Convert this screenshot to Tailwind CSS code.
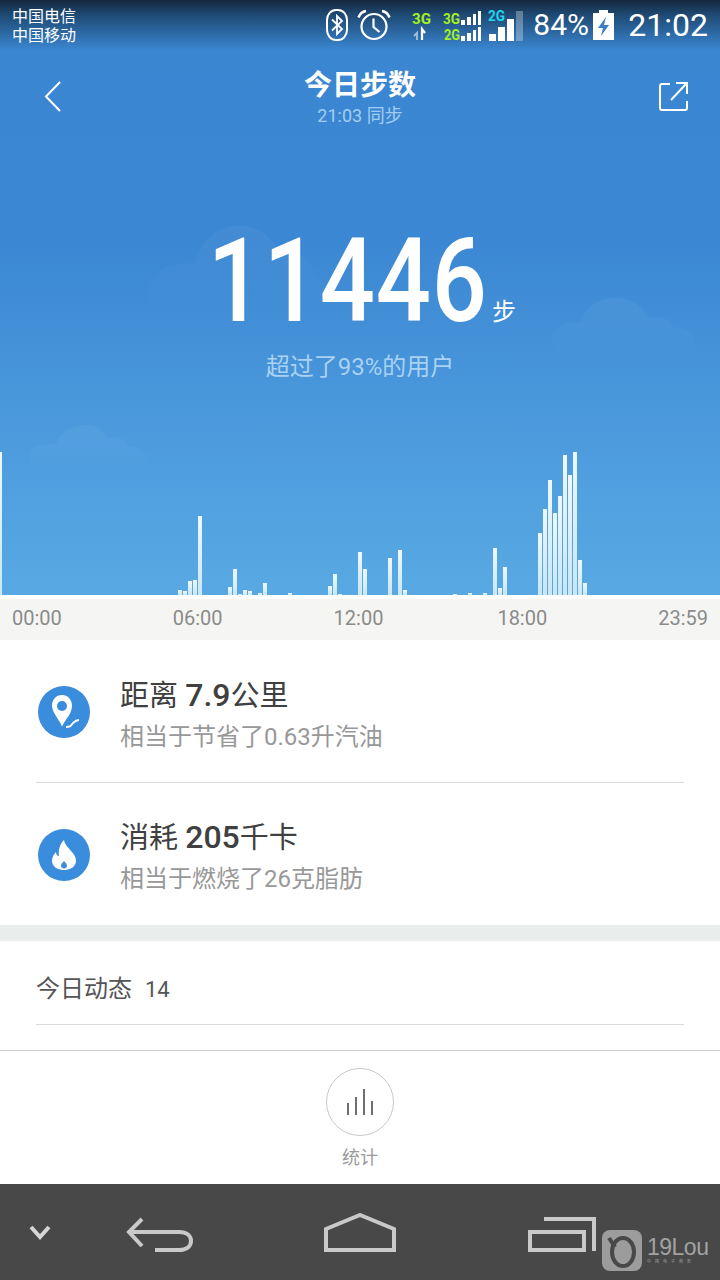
<!DOCTYPE html>
<html lang="zh">
<head>
  <meta charset="UTF-8" />
  <title>今日步数</title>
  <script src="https://cdn.jsdelivr.net/npm/@tailwindcss/browser@4"></script>
</head>
<body class="bg-white font-['Roboto','Noto_Sans_CJK_SC',sans-serif]">
  <div class="w-[720px] h-[1280px] flex flex-col overflow-hidden">

    <!-- blue top part -->
    <section class="relative h-[595px] shrink-0 overflow-hidden bg-[linear-gradient(180deg,#3a86d1_0px,#3b87d3_240px,#4e9cde_450px,#58a9e3_595px)] text-white">
      <div class="absolute inset-x-0 top-0 h-[50px] bg-[linear-gradient(180deg,#14283c_0%,#1f4a74_30%,#3a86d1_100%)]"></div>

      <!-- clouds -->
      <svg class="absolute left-[0px] top-[0px]" width="720" height="595" viewBox="0 0 720 595">
        <defs>
          <linearGradient id="cloudFade" x1="0" y1="0" x2="0" y2="1">
            <stop offset="0" stop-color="#fff" stop-opacity="0.045"/>
            <stop offset="1" stop-color="#fff" stop-opacity="0"/>
          </linearGradient>
        </defs>
        <path d="M150 310C145 285 155 265 177 265C185 263 191 263 195 265C201 237 221 225 241 226C261 227 273 239 277 251C295 247 313 261 315 277C325 283 329 293 325 310Z" fill="url(#cloudFade)"/>
        <path d="M552 338C554 326 566 322 582 322C584 306 602 298 614 298C630 298 644 306 648 318C662 314 670 320 674 328C688 326 698 334 698 360H572C560 358 552 348 552 338Z" fill="url(#cloudFade)"/>
        <path d="M30 461C28 449 36 445 46 445C50 443 54 443 56 445C60 431 74 425 86 425C98 425 106 433 108 439C116 435 126 439 128 447C142 445 150 455 148 475H42C34 473 30 467 30 461Z" fill="url(#cloudFade)"/>
      </svg>

      <!-- status bar -->
      <div class="relative h-[50px] flex items-start">
        <div class="pl-[12px] pt-[7px] text-[16px] leading-[19px] text-white">
          <p>中国电信</p>
          <p>中国移动</p>
        </div>
        <div class="ml-auto relative flex items-center h-[50px] pr-[12px]">
          <svg width="24" height="34" viewBox="0 0 24 34" fill="none" stroke="#fff" stroke-width="2" class="mr-[8px]"><rect x="2" y="2" width="20" height="30" rx="9" ry="10"/><path d="M7 11.500 17 21l-5 5V8l5 5-10 9.500" stroke-width="1.800"/></svg>
          <svg width="34" height="32" viewBox="0 0 34 32" fill="none" stroke="#fff" stroke-width="2.200" class="mr-[18px]"><circle cx="17" cy="17.500" r="12.500"/><path d="M16.500 9.500v8.500l6 5" /><path d="M1.500 8.500C3 4.500 6 2.500 9 2M32.500 8.500C31 4.500 28 2.500 25 2" stroke-width="2.600"/></svg>
          <svg width="116" height="36" viewBox="0 0 116 36" class="mr-[8px] font-bold">
            <text x="3" y="17" font-size="15" fill="#a6f01e" textLength="19" lengthAdjust="spacingAndGlyphs">3G</text>
            <path d="M8 33v-7l-3 3" fill="none" stroke="#9dbbd8" stroke-width="2"/><path d="M13 33v-11l3 4" fill="none" stroke="#fff" stroke-width="2.200"/>
            <text x="34" y="17" font-size="14" fill="#a6f01e" textLength="17" lengthAdjust="spacingAndGlyphs">3G</text>
            <text x="35" y="33" font-size="14" fill="#a6f01e" textLength="16" lengthAdjust="spacingAndGlyphs">2G</text>
            <path d="M52 13h4v5h-4zM58 10h4v8h-4zM64 7h3v11h-3zM69 4h3v14h-3zM52 29h4v5h-4zM58 26h4v8h-4zM64 23h3v11h-3zM69 20h3v14h-3z" fill="#fff"/>
            <text x="79" y="14" font-size="15" fill="#1fd6ec" textLength="17" lengthAdjust="spacingAndGlyphs">2G</text>
            <path d="M80 27h7v7h-7zM89 20h7v14h-7zM98 12h7v22h-7z" fill="#fff"/>
            <path d="M107 4h7v30h-7z" fill="#fff" fill-opacity="0.3"/>
          </svg>
          <span class="text-[30px] leading-none w-[60px]">84%</span>
          <svg width="21" height="30" viewBox="0 0 21 30" class="mr-[14px]"><path d="M6 0h9v3h6v27H0V3h6z" fill="#fff"/><path d="M13 7 5 18h5l-2 8 8-11h-5z" fill="#3a7fc4"/></svg>
          <span class="text-[32px] leading-none">21:02</span>
        </div>
      </div>

      <!-- title row -->
      <div class="relative h-[80px] flex items-start">
        <svg width="20" height="32" viewBox="0 0 20 32" fill="none" stroke="#fff" stroke-width="2" class="absolute left-[43px] top-[30px]"><path d="M17 2 3 16.500 17 31"/></svg>
        <div class="w-full text-center">
          <h1 class="text-[28px] leading-[34px] mt-[19px] font-bold">今日步数</h1>
          <p class="text-[18px] leading-[20px] mt-[3px] text-[#a3cdf0]">21:03 同步</p>
        </div>
        <svg width="30" height="30" viewBox="0 0 30 30" fill="none" stroke="#fff" stroke-width="2" class="absolute left-[659px] top-[31px]"><path d="M11 3H3a2 2 0 0 0-2 2v22a2 2 0 0 0 2 2h23a2 2 0 0 0 2-2v-7"/><path d="M12 19 27 3M17 2h11v11"/></svg>
      </div>

      <!-- step count -->
      <div class="relative h-[183px] pt-[93px]">
        <div class="flex justify-center">
          <span class="inline-block origin-center scale-x-[0.83] text-[117px] leading-[116px] font-medium tracking-[1px] ml-[-25px]">11446</span>
        </div>
        <span class="absolute left-[492px] top-[168px] text-[24px] leading-[28px]">步</span>
      </div>
      <p class="relative mt-[39px] text-center text-[24px] leading-[30px] text-[#a9d2f2]">超过了93%的用户</p>

      <!-- step bars, one slot every 5px -->
      <div id="bars" class="absolute left-[-2px] bottom-0 h-[150px] flex items-end"></div>
    </section>

    <!-- time axis -->
    <div class="h-[45px] shrink-0 bg-[#f5f6f3] border-t-[4px] border-white flex items-center justify-between px-[12px] pb-[4px] text-[20px] text-[#8b8b8b]">
      <span>00:00</span>
      <span>06:00</span>
      <span>12:00</span>
      <span class="ml-[3px]">18:00</span>
      <span>23:59</span>
    </div>

    <!-- stats -->
    <section class="h-[285px] shrink-0 bg-white px-[36px]">
      <div class="h-[143px] flex items-start border-b border-[#d9d9d9]">
        <div class="mt-[46px] w-[52px] h-[52px] ml-[2px] rounded-full bg-[#3a8cdc] flex items-center justify-center">
          <svg width="34" height="36" viewBox="0 0 34 36"><path d="M15 1C9 1 5 6 5 11.500c0 7 6 12 10 21 2-4 4-7 6-9.500C23 20 25 16 25 11.500 25 6 21 1 15 1Z" fill="#fff"/><circle cx="15" cy="12" r="5" fill="#3a8cdc"/><path d="M17 34c5 0 6-2 8-5 2-2 4-3 7-3" fill="none" stroke="#3a8cdc" stroke-width="4"/><path d="M19 33c4 0 5-1 7-4 2-2 3-3 6-3" fill="none" stroke="#fff" stroke-width="1.800"/></svg>
        </div>
        <div class="ml-[30px]">
          <p class="mt-[37px] text-[29px] leading-[36px] text-[#404040]">距离 <span class="text-[32px] font-medium">7.9</span>公里</p>
          <p class="mt-[8px] text-[24px] leading-[30px] text-[#989898]">相当于节省了0.63升汽油</p>
        </div>
      </div>
      <div class="flex items-start">
        <div class="mt-[46px] w-[52px] h-[52px] ml-[2px] rounded-full bg-[#3a8cdc] flex items-center justify-center">
          <svg width="26" height="30" viewBox="0 0 26 30"><path d="M13 0c1 5 4 7 7 11 3 3 5 6 5 10 0 5-5 9-12 9S1 26 1 21c0-4 2-7 4-9 0 2 1 4 3 4C7 10 9 4 13 0Zm0 21c-1.500 1.500-3 3-3 5 0 1.500 1.500 2.500 3 2.500s3-1 3-2.500c0-2-1.500-3.500-3-5Z" fill="#fff" fill-rule="evenodd"/></svg>
        </div>
        <div class="ml-[30px]">
          <p class="mt-[36px] text-[29px] leading-[36px] text-[#404040]">消耗 <span class="text-[32px] font-medium">205</span>千卡</p>
          <p class="mt-[8px] text-[24px] leading-[30px] text-[#989898]">相当于燃烧了26克脂肪</p>
        </div>
      </div>
    </section>

    <div class="h-[16px] shrink-0 bg-[#e9eeec]"></div>

    <!-- today's activity -->
    <section class="h-[110px] shrink-0 bg-white border-b border-[#cfcfcf] px-[36px]">
      <div class="h-[84px] flex items-center border-b border-[#d9d9d9] text-[#555] text-[24px] pt-[12px]">
        <span>今日动态</span>
        <span class="ml-[13px] text-[22px] pt-[2px]">14</span>
      </div>
    </section>

    <!-- tab -->
    <section class="h-[133px] shrink-0 bg-white flex flex-col items-center">
      <div class="mt-[17px] w-[68px] h-[68px] rounded-full border border-[#c8c8c8] flex items-center justify-center">
        <svg width="28" height="28" viewBox="0 0 28 28" stroke="#6f6f6f" stroke-width="2"><path d="M2 27V15M10 27V9M18 27V1M26 27V13"/></svg>
      </div>
      <p class="mt-[10px] text-[18px] leading-[24px] text-[#9a9a9a]">统计</p>
    </section>

    <!-- android nav bar -->
    <nav class="relative h-[96px] shrink-0 bg-[#484848]">
      <svg class="absolute left-[29px] top-[41px]" width="22" height="16" viewBox="0 0 22 16" fill="none" stroke="#d5d5d5" stroke-width="4"><path d="M2 2l9 10 9-10"/></svg>
      <svg class="absolute left-[126px] top-[33px]" width="68" height="36" viewBox="0 0 68 36" fill="none" stroke="#c9c9c9" stroke-width="4"><path d="M16 2 3 15l13 14"/><path d="M3 15h50c8 0 12 4 12 9s-4 9-12 9H29"/></svg>
      <svg class="absolute left-[323px] top-[29px]" width="74" height="40" viewBox="0 0 74 40" fill="none" stroke="#c9c9c9" stroke-width="4"><path d="M3 37V16L37 2l34 14v21z"/></svg>
      <svg class="absolute left-[527px] top-[33px]" width="70" height="36" viewBox="0 0 70 36" fill="none" stroke="#c9c9c9" stroke-width="4"><path d="M17 2h50v32"/><path d="M3 15h54v18H3z" stroke-width="4"/></svg>

      <!-- watermark -->
      <div class="absolute left-[602px] top-[46px] flex items-start">
        <div class="w-[40px] h-[41px] rounded-[8px] bg-[#9c9c9c] flex items-center justify-center">
          <svg width="34" height="36" viewBox="0 0 34 36" fill="none" stroke="#484848" stroke-width="4"><ellipse cx="18" cy="19" rx="11" ry="14"/><path d="M4 5l6 9"/></svg>
        </div>
        <div class="ml-[5px] pt-[7px] text-[#a2a2a2]">
          <p class="text-[23px] leading-[20px] tracking-[-0.5px] font-['Liberation_Sans',sans-serif]">19Lou</p>
          <p class="text-[4px] leading-[7px] tracking-[4px] mt-[1px] whitespace-nowrap">中国电子商务</p>
        </div>
      </div>
    </nav>
  </div>

  <script>
    // top edge (y) of each bar, keyed by x; baseline of the chart is y=595
    var tops = {0:452,178:590,183:591,188:581,193:580,198:516,228:587,233:569,238:594,243:590,248:591,258:593,263:583,288:593,328:586,333:574,338:594,358:552,363:569,388:558,398:550,403:590,453:594,468:593,483:593,493:548,498:588,503:567,538:533,543:509,548:480,553:513,558:496,563:455,568:475,573:452,578:560,583:583};
    var bars = document.getElementById('bars');
    for (var x = -2; x < 720; x += 5) {
      var key = x < 0 ? 0 : x;
      var bar = document.createElement('div');
      bar.className = 'w-[4px] mr-[1px] shrink-0 bg-[linear-gradient(180deg,#eef8fd,#c9e6f7)]';
      bar.style.height = (tops[key] ? 595 - tops[key] : 0) + 'px';
      bars.appendChild(bar);
    }
  </script>
</body>
</html>
